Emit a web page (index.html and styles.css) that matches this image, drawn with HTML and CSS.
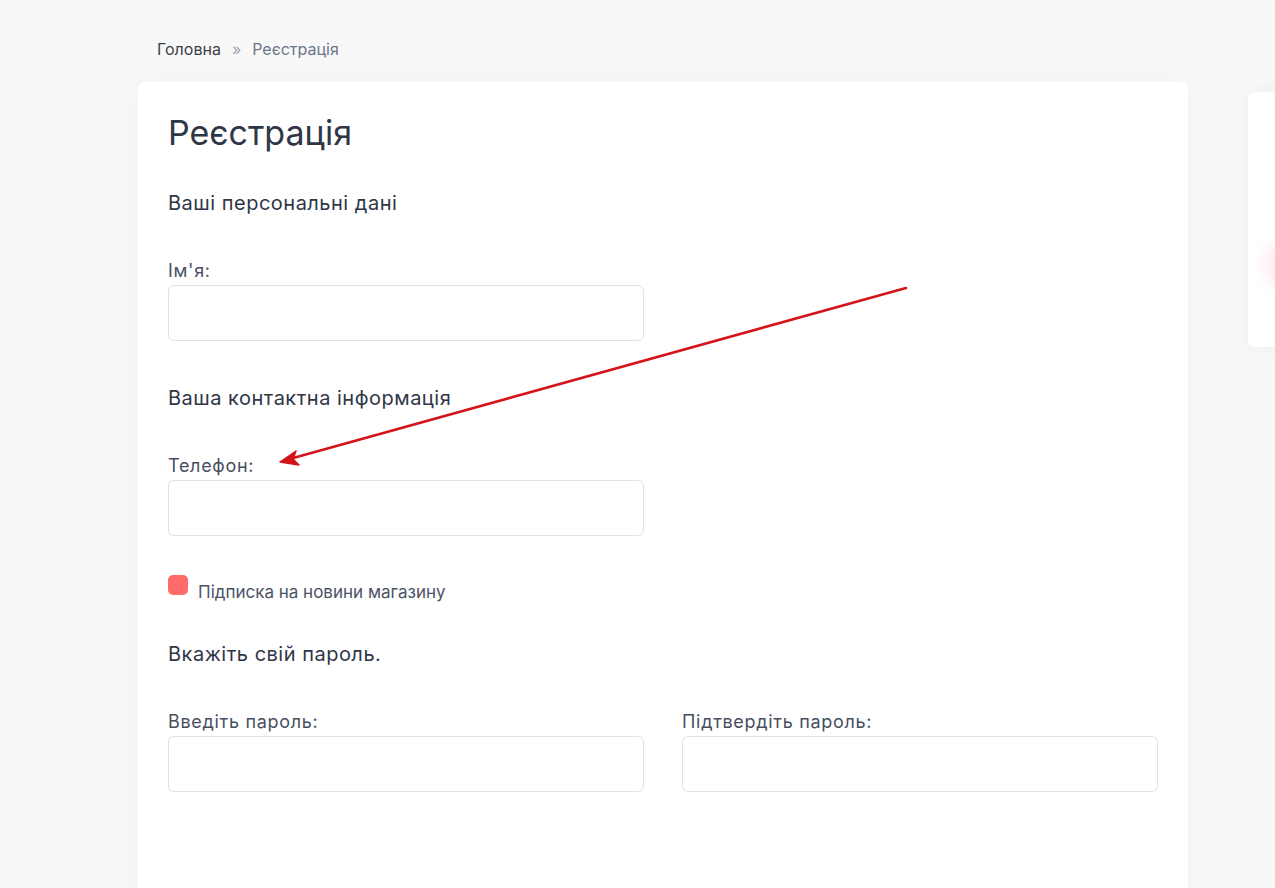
FILE: index.html
```html
<!DOCTYPE html>
<html lang="uk">
<head>
	<meta charset="utf-8">
	<title>Реєстрація</title>
	<link rel="stylesheet" href="styles.css">
</head>
<body>
	<div class="page">
		<div class="main">
			<nav class="crumbs">
				<a href="#">Головна</a>
				<span class="sep">»</span>
				<span class="current">Реєстрація</span>
			</nav>

			<section class="card">
				<h1>Реєстрація</h1>

				<h2>Ваші персональні дані</h2>
				<div class="grid">
					<div class="field">
						<label>Ім'я:</label>
						<input type="text" class="input">
					</div>
				</div>

				<h2>Ваша контактна інформація</h2>
				<div class="grid">
					<div class="field">
						<label>Телефон:</label>
						<input type="text" class="input">
					</div>
				</div>

				<label class="check">
					<span class="box"></span>
					<span>Підписка на новини магазину</span>
				</label>

				<h2>Вкажіть свій пароль.</h2>
				<div class="grid">
					<div class="field">
						<label>Введіть пароль:</label>
						<input type="password" class="input">
					</div>
					<div class="field">
						<label>Підтвердіть пароль:</label>
						<input type="password" class="input">
					</div>
				</div>
			</section>
		</div>

		<aside class="side">
			<span class="glow"></span>
		</aside>
	</div>

	<svg class="arrow" width="1275" height="888" viewBox="0 0 1275 888">
		<line x1="906" y1="288" x2="286" y2="460" stroke="#d4141a" stroke-width="2.6" stroke-linecap="round"/>
		<path d="M280 462 L296 451 L293 459 L299 465 Z" fill="#d4141a" stroke="#d4141a" stroke-width="1.5" stroke-linejoin="round"/>
	</svg>
</body>
</html>
```

FILE: styles.css
```css
* {
	box-sizing: border-box;
}
html, body {
	margin: 0;
	height: 100%;
	overflow: hidden;
}
body {
	background-color: #f8f8f8;
	font-family: "Inter", "Noto Sans", sans-serif;
	color: #333b4a;
}
.page {
	display: flex;
	align-items: flex-start;
	gap: 60px;
	padding-left: 138px;
}
.main {
	width: 1050px;
	flex-shrink: 0;
}
.crumbs {
	display: flex;
	align-items: flex-start;
	gap: 11px;
	height: 82px;
	padding: 39px 0 0 19px;
	font-size: 16px;
	line-height: 20px;
}
.crumbs a {
	color: #3a3f4a;
	text-decoration: none;
}
.crumbs .sep {
	color: #a0a6b0;
}
.crumbs .current {
	color: #6b7689;
}
.card {
	background: #fff;
	border-radius: 6px;
	padding: 30px 30px 120px;
	box-shadow: 0 0 30px rgba(0, 0, 0, 0.03);
	min-height: 820px;
}
h1 {
	margin: 0 0 37px;
	font-size: 34px;
	font-weight: 400;
	line-height: 42px;
	color: #2f3747;
}
h2 {
	margin: 0 0 45px;
	font-size: 20px;
	font-weight: 400;
	line-height: 24px;
	letter-spacing: 0.5px;
	color: #2f3747;
}
.grid {
	display: grid;
	grid-template-columns: 476px 476px;
	column-gap: 38px;
	margin-bottom: 45px;
}
.field label {
	display: block;
	font-size: 18px;
	line-height: 22px;
	letter-spacing: 0.7px;
	color: #474f5f;
	margin-bottom: 3px;
}
.input {
	display: block;
	width: 100%;
	height: 56px;
	border: 1px solid #dde3ea;
	border-radius: 6px;
	background: #fff;
	font-size: 16px;
	padding: 0 14px;
	outline: none;
}
.check {
	display: flex;
	align-items: flex-start;
	gap: 10px;
	font-size: 17px;
	color: #4a5366;
	margin: -6px 0 40px;
}
.check .box {
	width: 20px;
	height: 20px;
	border-radius: 5px;
	background: #ff6b6b;
}
.check span:last-child {
	padding-top: 7px;
}
.side {
	margin-top: 92px;
	width: 300px;
	height: 255px;
	flex-shrink: 0;
	background: #fff;
	border-radius: 6px;
	box-shadow: 0 0 20px rgba(0, 0, 0, 0.05);
	position: relative;
	overflow: hidden;
}
.side .glow {
	position: absolute;
	left: 14px;
	top: 150px;
	width: 40px;
	height: 45px;
	border-radius: 50%;
	background: rgba(255, 120, 120, 0.12);
	filter: blur(6px);
}
.arrow {
	position: absolute;
	left: 0;
	top: 0;
	pointer-events: none;
}
```
